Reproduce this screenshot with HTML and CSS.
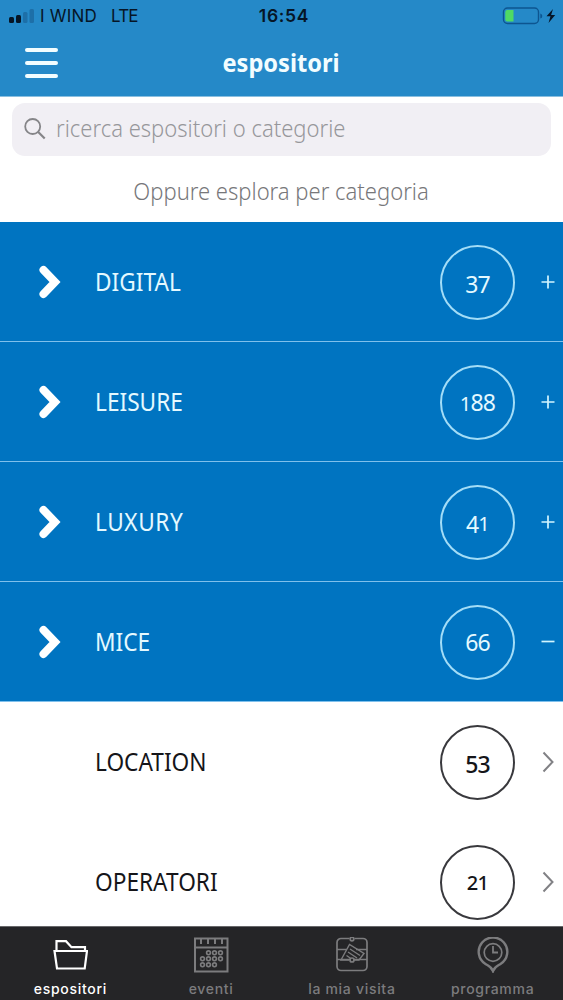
FILE: index.html
```html
<!DOCTYPE html>
<html lang="it">
<head>
    <meta charset="UTF-8">
    <meta name="viewport" content="width=device-width, initial-scale=1.0">
    <title>espositori</title>
    <link rel="stylesheet" href="styles.css">
</head>
<body>
    <div class="app">
        <header class="header">
            <div class="status-bar">
                <div class="status-left">
                    <svg class="signal" width="26" height="16" viewBox="0 0 26 16">
                        <rect x="0" y="9" width="5" height="6" rx="1.5" fill="#061526"/>
                        <rect x="7" y="7" width="5" height="8" rx="1.5" fill="#061526"/>
                        <rect x="14" y="4" width="4.5" height="11" rx="1.5" fill="#1d6fa8"/>
                        <rect x="20.500" y="1" width="4.500" height="14" rx="1.500" fill="#1d6fa8"/>
                    </svg>
                    <span class="carrier">I WIND</span>
                    <span class="network">LTE</span>
                </div>
                <span class="clock">16:54</span>
                <svg class="battery" width="56" height="20" viewBox="0 0 56 20">
                    <rect x="3.500" y="2" width="35" height="15.500" rx="4" fill="none" stroke="#0d5590" stroke-width="1.400"/>
                    <path d="M5.300 6q0-2 2-2h6.200v11.500H7.300q-2 0-2-2z" fill="#4fd964"/>
                    <path d="M40.300 7.500v5q2-.5 2-2.500t-2-2.500z" fill="#0d5590"/>
                    <path d="M53 3l-6.500 7.300h4L48.500 17l6.700-8h-4.100z" fill="#061526"/>
                </svg>
            </div>
            <div class="nav-bar">
                <button class="menu" aria-label="menu"><i></i><i></i><i></i></button>
                <h1 class="title">espositori</h1>
            </div>
        </header>

        <main class="content">
            <div class="search">
                <svg width="24" height="24" viewBox="0 0 24 24" fill="none" stroke="#858588" stroke-width="1.800">
                    <circle cx="8.700" cy="8.500" r="7.500"/>
                    <path d="M14.200 14l6.500 6.500" stroke-width="2.200"/>
                </svg>
                <span class="search-text">ricerca espositori o categorie</span>
            </div>
            <p class="hint"><span class="hint-text">Oppure esplora per categoria</span></p>

            <ul class="list">
                <li class="row">
                    <svg class="arrow" width="24" height="36" viewBox="0 0 24 36"><path d="M6.500 6L18 18 6.500 30"/></svg>
                    <span class="name">DIGITAL</span>
                    <span class="count"><span class="low">37</span></span>
                    <svg class="toggle" width="14" height="14" viewBox="0 0 14 14"><path d="M.5 7h13M7 .5v13"/></svg>
                </li>
                <li class="row">
                    <svg class="arrow" width="24" height="36" viewBox="0 0 24 36"><path d="M6.500 6L18 18 6.500 30"/></svg>
                    <span class="name">LEISURE</span>
                    <span class="count"><span><span class="small">1</span>88</span></span>
                    <svg class="toggle" width="14" height="14" viewBox="0 0 14 14"><path d="M.5 7h13M7 .5v13"/></svg>
                </li>
                <li class="row">
                    <svg class="arrow" width="24" height="36" viewBox="0 0 24 36"><path d="M6.500 6L18 18 6.500 30"/></svg>
                    <span class="name luxury">LUXURY</span>
                    <span class="count"><span><span class="low">4</span><span class="small">1</span></span></span>
                    <svg class="toggle" width="14" height="14" viewBox="0 0 14 14"><path d="M.5 7h13M7 .5v13"/></svg>
                </li>
                <li class="row">
                    <svg class="arrow" width="24" height="36" viewBox="0 0 24 36"><path d="M6.500 6L18 18 6.500 30"/></svg>
                    <span class="name">MICE</span>
                    <span class="count"><span>66</span></span>
                    <svg class="toggle" width="14" height="14" viewBox="0 0 14 14"><path d="M.5 6.500h13"/></svg>
                </li>
                <li class="row sub">
                    <span class="name">LOCATION</span>
                    <span class="count"><span class="low">53</span></span>
                    <svg class="toggle" width="14" height="22" viewBox="0 0 14 22"><path d="M2.500 1.500l9 9.500-9 9.500"/></svg>
                </li>
                <li class="row sub">
                    <span class="name">OPERATORI</span>
                    <span class="count"><span class="small">21</span></span>
                    <svg class="toggle" width="14" height="22" viewBox="0 0 14 22"><path d="M2.500 1.500l9 9.500-9 9.500"/></svg>
                </li>
            </ul>
        </main>

        <nav class="tabs">
            <a class="tab active">
                <svg width="36" height="36" viewBox="0 0 36 36" fill="none" stroke="currentColor" stroke-width="2.200">
                    <path d="M4.500 14V4.200h9.500l5.500 6h13.500V14"/>
                    <path d="M2.500 14h32.500l-2.300 17.500H5z"/>
                </svg>
                <span>espositori</span>
            </a>
            <a class="tab">
                <svg width="36" height="36" viewBox="0 0 36 36" fill="none" stroke="currentColor" stroke-width="2">
                    <path d="M2 1.500h32.500v33H2zM2 10.500h32M8 2v5M15 2v5M22 2v5M29 2v5"/>
                    <g stroke-width="1.600">
                        <circle cx="15.500" cy="15.800" r="1.900"/><circle cx="21.500" cy="15.800" r="1.900"/><circle cx="27.500" cy="15.800" r="1.900"/>
                        <circle cx="9.500" cy="21.800" r="1.900"/><circle cx="15.500" cy="21.800" r="1.900"/><circle cx="21.500" cy="21.800" r="1.900"/><circle cx="27.500" cy="21.800" r="1.900"/>
                        <circle cx="9.500" cy="27.800" r="1.900"/><circle cx="15.500" cy="27.800" r="1.900"/><circle cx="21.500" cy="27.800" r="1.900"/>
                    </g>
                </svg>
                <span>eventi</span>
            </a>
            <a class="tab">
                <svg width="36" height="36" viewBox="0 0 36 36" fill="none" stroke="currentColor" stroke-width="1.700">
                    <path d="M15.500 1.500H7a4 4 0 0 0-4 4v24a4 4 0 0 0 4 4h22a4 4 0 0 0 4-4v-24a4 4 0 0 0-4-4h-8.500"/>
                    <circle cx="18" cy="2" r="1.800"/>
                    <circle cx="18" cy="23" r="2"/>
                    <path d="M3 12.500h9.500M22 12.500h11M3 22.500h13M20 22.500h13" stroke-width="1.300"/>
                    <path d="M15 23H7l8.500-15.500 14.500 9L25 23h-5M16 12l10 6.500M14 15l9 6M12.500 18.500l4 2.800" stroke-width="1.400"/>
                </svg>
                <span>la mia visita</span>
            </a>
            <a class="tab">
                <svg width="36" height="36" viewBox="0 0 36 36" fill="none" stroke="currentColor" stroke-width="1.800">
                    <path d="M18 34c-1.500-4.200-4.300-5-7.500-7a14.300 14.300 0 1 1 15 0c-3.200 2-6 2.800-7.500 7z" stroke-width="2.400"/>
                    <circle cx="18" cy="15.500" r="8.800" stroke-width="1.700"/>
                    <path d="M18 9v6.500h5"/>
                </svg>
                <span>programma</span>
            </a>
        </nav>
    </div>
</body>
</html>
```
FILE: styles.css
```css
* {
    margin: 0;
    padding: 0;
    box-sizing: border-box;
}

body {
    font-family: "Noto Sans", sans-serif;
    background: #fff;
}

.app {
    height: 1000px;
    display: flex;
    flex-direction: column;
    overflow: hidden;
}

.header {
    height: 97px;
    flex: none;
    background: #2589c8;
    border-bottom: 1px solid #8abfe0;
}

.status-bar {
    height: 32px;
    padding: 0 7px 0 9px;
    display: grid;
    grid-template-columns: 1fr auto 1fr;
    align-items: center;
    color: #061526;
    font-family: Inter, sans-serif;
    font-size: 17px;
}

.status-left {
    display: flex;
    align-items: center;
}

.carrier {
    margin-left: 5px;
    letter-spacing: 0.2px;
}

.network {
    margin-left: 14px;
    letter-spacing: -0.8px;
}

.clock {
    font-weight: 600;
    font-size: 17.5px;
    letter-spacing: 0.7px;
    padding: 0 0 1px 3px;
}

.battery {
    justify-self: end;
}

.nav-bar {
    height: 61px;
    padding: 0 25px;
    display: grid;
    grid-template-columns: 1fr auto 1fr;
    align-items: center;
}

.menu {
    width: 33px;
    height: 30px;
    background: none;
    border: none;
    display: flex;
    flex-direction: column;
    justify-content: space-between;
}

.menu i {
    height: 4px;
    border-radius: 2px;
    background: #f2fdff;
}

.title {
    color: #f2fdff;
    font-size: 25px;
    font-weight: 700;
    line-height: 30px;
    padding-bottom: 1px;
    transform: scaleX(0.945);
}

.content {
    flex: 1;
    min-height: 0;
    overflow: hidden;
}

.search {
    height: 53px;
    margin: 6px 12px 0;
    padding: 0 12px;
    border-radius: 13px;
    background: #f1eff4;
    display: flex;
    align-items: center;
    gap: 8px;
    color: #97979b;
    font-size: 24px;
    font-weight: 300;
}

.hint {
    height: 66px;
    padding-top: 2px;
    display: flex;
    align-items: center;
    justify-content: center;
    color: #77777a;
    font-size: 24px;
    font-weight: 300;
}

.search-text,
.hint-text {
    white-space: nowrap;
    transform: scaleX(0.917);
}

.search-text {
    transform-origin: left;
    padding-bottom: 4px;
}

.list {
    list-style: none;
}

.row {
    height: 120px;
    padding-right: 8px;
    border-bottom: 1px solid #7fc0ec;
    background: #0074c1;
    color: #e4f9ff;
    display: grid;
    grid-template-columns: 95px 345px 75px 1fr;
    align-items: center;
}

.arrow {
    margin-left: 37px;
    fill: none;
    stroke: #fff;
    stroke-width: 8;
    stroke-linecap: round;
}

.name {
    grid-column: 2;
    font-size: 24.5px;
    white-space: nowrap;
    transform: scaleX(0.925);
    transform-origin: left;
}

.luxury {
    letter-spacing: 0.6px;
}

.count {
    width: 75px;
    height: 75px;
    margin-top: 1px;
    border: 2px solid #a3ddf7;
    border-radius: 50%;
    display: flex;
    align-items: center;
    justify-content: center;
    font-size: 23px;
    letter-spacing: -0.8px;
}

.low {
    position: relative;
    top: 2px;
}

.small {
    font-size: 20px;
}

.toggle {
    justify-self: end;
    fill: none;
    stroke: #d2f5ff;
    stroke-width: 1.7;
}

.sub {
    background: #fff;
    border-color: #fff;
    color: #151519;
}

.sub .count {
    border-color: #39393d;
    font-weight: 500;
}

.sub .toggle {
    stroke: #818185;
    stroke-width: 2;
}

.tabs {
    height: 74px;
    flex: none;
    background: #252527;
    border-top: 1px solid #68686a;
    display: grid;
    grid-template-columns: repeat(4, 1fr);
}

.tab {
    padding-top: 10px;
    display: flex;
    flex-direction: column;
    align-items: center;
    gap: 7px;
    color: #7c7c7e;
    font-family: Inter, sans-serif;
    font-size: 14px;
    font-weight: 500;
    line-height: 18px;
    letter-spacing: 0.7px;
}

.tab.active {
    color: #fff;
}
```
